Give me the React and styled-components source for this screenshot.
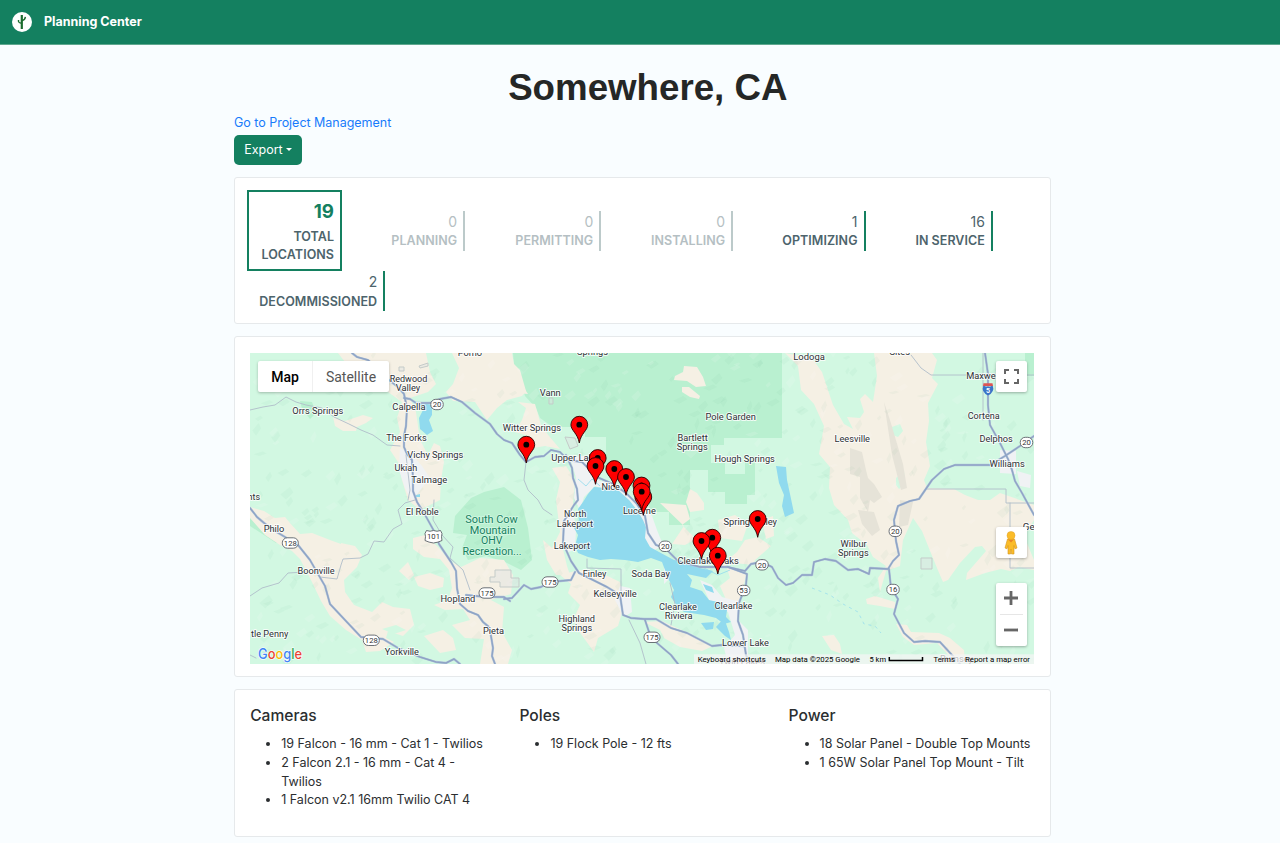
import React from "react";
import styled, { createGlobalStyle } from "styled-components";

const Global = createGlobalStyle`
  *, *::before, *::after { box-sizing: border-box; }
  html { background: #f9fdff; }
  body {
    margin: 0;
    font-family: Inter, "Liberation Sans", sans-serif;
    font-size: 12.5px;
    line-height: 18.75px;
    color: #2b2e30;
    background: #f9fdff;
    height: 843px;
    overflow: hidden;
  }
`;

const Navbar = styled.header`
  display: flex;
  align-items: center;
  gap: 12px;
  height: 44.5px;
  padding: 0 12px;
  background: #148060;
  border-bottom: 1px solid #5fa88f;
  color: #fff;
`;

const Brand = styled.span`
  font-weight: 700;
  font-size: 12.5px;
  margin-top: 0.6px;
`;

const Container = styled.main`
  width: 816.6px;
  margin-left: 234px;
`;

const Title = styled.h1`
  margin: 20.5px 0 0;
  padding-left: 11px;
  text-align: center;
  font-family: "Liberation Sans", Arial, sans-serif;
  font-weight: 700;
  font-size: 36.7px;
  line-height: 45px;
  color: #252726;
`;

const ProjectLink = styled.a`
  display: block;
  width: max-content;
  margin-top: 4.4px;
  color: #187bfb;
  font-size: 12.5px;
  letter-spacing: -0.02px;
  text-decoration: none;
`;

const ExportButton = styled.button`
  display: flex;
  align-items: center;
  justify-content: center;
  gap: 3px;
  width: 67.8px;
  height: 29.6px;
  margin: 1.8px 0 0;
  padding: 0;
  border: 0;
  border-radius: 5px;
  background: #148060;
  color: #fff;
  font: 400 12.5px Inter, sans-serif;
`;

const Caret = styled.span`
  border: 3.7px solid transparent;
  border-top-color: #fff;
  border-bottom: 0;
`;

const Card = styled.section`
  border: 1px solid #e6e9eb;
  border-radius: 3px;
  background: #fff;
  margin-top: 12.6px;
  padding: ${(p) => p.$pad};
  height: ${(p) => p.$height}px;
`;

const StatList = styled.div`
  display: flex;
  flex-wrap: wrap;
  align-items: center;
  column-gap: 37.5px;
`;

const Stat = styled.div`
  width: ${(p) => p.$width}px;
  height: 40px;
  padding-right: 6px;
  text-align: right;
  white-space: nowrap;
  border-right: 2px solid ${(p) => (p.$muted ? "#bccaca" : "#148060")};
  color: ${(p) => (p.$muted ? "#b5bfc3" : "#4d646c")};
`;

const TotalStat = styled(Stat)`
  border: 2px solid #148060;
  height: 81px;
  padding: 7px 5.5px 0 0;
`;

const StatValue = styled.div`
  font-size: ${(p) => (p.$large ? 18.75 : 14)}px;
  font-weight: ${(p) => (p.$large ? 700 : 400)};
  line-height: ${(p) => (p.$large ? 26 : 21)}px;
  ${(p) => p.$large && "color: #148060; margin-bottom: 1.6px;"}
`;

const StatLabel = styled.div`
  font-size: 12.5px;
  font-weight: 600;
  line-height: 18.75px;
  letter-spacing: 0.04px;
  padding-top: 0.6px;
`;

const MapFrame = styled.div`
  position: relative;
  width: 784px;
  height: 311px;
  overflow: hidden;
  font-family: Roboto, sans-serif;

  > svg { display: block; }
`;

const MapTypes = styled.div`
  position: absolute;
  left: 8px;
  top: 8px;
  display: flex;
  height: 31px;
  box-shadow: 0 1px 3px rgba(0, 0, 0, 0.25);
  border-radius: 2px;
  background: #fff;
`;

const MapType = styled.div`
  width: ${(p) => p.$width}px;
  text-align: center;
  font-size: 14px;
  line-height: 32px;
  font-weight: ${(p) => (p.$active ? 500 : 400)};
  color: ${(p) => (p.$active ? "#000" : "#565656")};
  border-left: ${(p) => (p.$active ? 0 : 1)}px solid #f0f0f0;
`;

const MapControl = styled.div`
  position: absolute;
  right: 7.3px;
  top: ${(p) => p.$top}px;
  width: 31px;
  height: ${(p) => p.$height}px;
  display: flex;
  flex-direction: column;
  align-items: center;
  justify-content: center;
  background: #fff;
  border-radius: 2px;
  box-shadow: 0 1px 3px rgba(0, 0, 0, 0.3);
`;

const ZoomHalf = styled.div`
  width: 23px;
  height: 31.5px;
  display: flex;
  align-items: center;
  justify-content: center;
  & + & { border-top: 1px solid #e6e6e6; }
`;

const Columns = styled.div`
  display: grid;
  grid-template-columns: repeat(3, 1fr);
  column-gap: 23.4px;
`;

const Heading = styled.h5`
  margin: 0 0 9.2px;
  font-size: 15.6px;
  font-weight: 500;
  line-height: 18.75px;
`;

const List = styled.ul`
  margin: 0;
  padding-left: 31px;
`;

const stats = [
  { value: 0, label: "PLANNING", width: 86.2, muted: true },
  { value: 0, label: "PERMITTING", width: 98.6, muted: true },
  { value: 0, label: "INSTALLING", width: 94.4, muted: true },
  { value: 1, label: "OPTIMIZING", width: 94.9 },
  { value: 16, label: "IN SERVICE", width: 89.8 },
  { value: 2, label: "DECOMMISSIONED", width: 138.2 },
];

const inventory = [
  {
    title: "Cameras",
    items: [
      "19 Falcon - 16 mm - Cat 1 - Twilios",
      "2 Falcon 2.1 - 16 mm - Cat 4 - Twilios",
      "1 Falcon v2.1 16mm Twilio CAT 4",
    ],
  },
  { title: "Poles", items: ["19 Flock Pole - 12 fts"] },
  { title: "Power", items: ["18 Solar Panel - Double Top Mounts", "1 65W Solar Panel Top Mount - Tilt"] },
];

// Place labels: text, left edge, baseline, width
const places = [
  ["Orrs Springs", 292.3, 414, 51], ["Redwood", 389.7, 382, 37.6], ["Valley", 395.7, 391, 24.5],
  ["Calpella", 392.3, 410, 33.4], ["The Forks", 386.3, 441, 40.4], ["Vichy Springs", 407.3, 458, 56],
  ["Ukiah", 394.5, 471, 22.7], ["Talmage", 411.3, 483, 36], ["nts", 247.5, 500, 12.5],
  ["Pomo", 457.7, 356, 24.3], ["Springs", 577, 355.3, 31], ["Vann", 539.7, 396, 21],
  ["Witter Springs", 502.8, 431, 58.2], ["Upper Lake", 551.3, 460.5, 47], ["Pole Garden", 705.5, 420, 50.3],
  ["Bartlett", 677.5, 441, 30.2], ["Springs", 676.7, 450.3, 31], ["Hough Springs", 714.5, 462, 60.3],
  ["Nice", 601.5, 490, 18.3], ["Lodoga", 793.3, 360, 31.5], ["Sites", 889.5, 354.5, 20.5],
  ["Maxwell", 966.2, 379, 34], ["Cortena", 967.7, 419, 32], ["Leesville", 834.5, 442, 35.5],
  ["Delphos", 979.5, 442, 33.2], ["Williams", 989.5, 467.3, 35.3], ["Philo", 263.7, 532.2, 20.7],
  ["El Roble", 405.7, 515, 33], ["Boonville", 297.5, 574.3, 37.2], ["Hopland", 440.5, 602.3, 34.8],
  ["Pieta", 483, 634, 21], ["tle Penny", 251, 636.7, 37.3], ["Yorkville", 384.7, 655, 34.3],
  ["North", 564, 517.3, 22.3], ["Lakeport", 556.7, 526.7, 36.3], ["Lakeport", 553.7, 549, 36.3],
  ["Finley", 582.7, 577.2, 23.6], ["Kelseyville", 593.5, 596.5, 43.3], ["Highland", 558.5, 621.5, 36.5],
  ["Springs", 561.5, 630.5, 30.6], ["Soda Bay", 631.5, 577.2, 38.3], ["Clearlake", 659, 609.8, 38],
  ["Riviera", 664.7, 619, 27.8], ["Clearlake", 714.5, 608.5, 38], ["Lower Lake", 722, 646, 47],
  ["Lucerne", 623, 514, 32.8], ["Clearlake Oaks", 677.5, 564, 61.3], ["Spring Valley", 723.5, 525.2, 53.5],
  ["Twin Lakes", 719, 664.5, 46], ["Wilbur", 840.5, 547, 26.2], ["Springs", 838, 556.2, 30.7],
  ["Geneva", 1022.8, 529.5, 32], ["Rumsey", 940, 661.5, 33],
];

const parkLabels = [
  ["South Cow", 465.3, 522.5, 52.5], ["Mountain", 469.7, 533.5, 46], ["OHV", 481, 544.3, 21.5], ["Recreation...", 462.5, 555.3, 59],
];

const shields = [
  ["20", 437, 404.5], ["128", 290.3, 543], ["101", 433.5, 536.5, true], ["175", 487, 593], ["128", 371.3, 640.3],
  ["175", 550, 582], ["20", 665.3, 546.3], ["175", 652, 637.3], ["20", 762, 564.8], ["53", 743.7, 590.5],
  ["20", 895.3, 531.3], ["16", 893, 589.5], ["20", 1026.5, 442.5],
];

const pins = [
  [526.3, 444.7], [579.3, 424.7], [597.7, 458], [595.5, 466], [614.3, 469], [626, 477],
  [641.5, 485.5], [643.3, 497], [641.7, 491.7], [712.3, 537.7], [701.5, 541], [717.8, 555.7], [757.7, 519],
];

const beige = [
  "M338 353L348 366L378 372L388 392L402 402L397 418L400 432L390 450L398 462L402 480L408 500L420 510L440 500L441 480L444 462L440 446L434 443L428 455L420 440L416 412L410 398L428 392L436 384L430 372L426 353Z",
  "M452 353L459 368L453 384L446 392L453 401L475 402L487 420L497 408L507 400L522 396L526 391L520 370L514 364L512 353Z",
  "M504 364L515 366L519 380L528 394L516 393L504 400Z",
  "M333 417L345 421L363 415L373 418L366 423L357 427L356 431L343 431L335 426Z",
  "M518 402L535 404L541 425L549 436L560 449L545 446L533 448L529 436L515 432L522 420L526 408Z",
  "M552 468L566 466L575 480L573 505L565 520L562 545L567 566L570 575L556 575L547 560L543 540L552 548L560 532L556 500L560 482Z",
  "M250 507L264 511L275 518L285 517L290 523L300 534L312 533L330 540L341 544L341 543L355 546L362 555L357 567L344 580L345 592L354 605L372 612L382 602L393 607L410 609L414 625L403 636L388 631L386 638L394 642L380 651L366 652L362 640L346 630L330 616L321 601L311 580L300 559L292 551L280 545L265 535L250 518Z",
  "M413 538L425 535L438 547L450 561L461 567L480 558L504 560L513 575L511 594L491 600L504 607L502 632L512 650L508 664L480 664L484 639L465 638L452 625L470 620L463 609L445 610L434 605L448 600L452 588L449 570L440 559L424 557L413 549Z",
  "M399 571L408 562L414 575L409 580Z", "M414 577L430 573L444 578L443 587L430 590L418 586Z",
  "M424 636L443 630L453 638L456 650L440 653Z",
  "M560 575L579 570L599 572L620 582L625 603L618 626L598 638L594 652L578 630L574 618L580 605L568 593L571 584Z",
  "M644 622L662 621L690 634L713 646L702 651L680 647L664 638L660 630Z",
  "M675 376L683 372L684 366L697 367L703 377L706 386L696 387L687 381L674 380Z",
  "M682 387L689 387L700 396L699 399L690 397L682 392Z",
  "M686 502L690 489L697 493L704 503L704 510L690 512Z",
  "M660 503L686 505L690 519L682 525L696 539L685 545L672 544L684 526Z",
  "M725 562L753 565L755 560L771 546L758 537L745 540L737 552L720 566L747 573L737 610L728 604L720 586L730 578Z",
  "M718 520L735 515L748 524L742 541L720 538Z", "M762 520L773 516L774 536L766 539Z",
  "M785 353L811 358L814 361L822 372L833 405L844 424L853 429L847 417L860 418L864 412L860 399L865 394L873 402L877 376L874 353L932 353L937 360L932 378L938 384L928 403L929 421L926 442L930 466L924 480L927 488L954 489L965 495L978 500L990 500L1000 493L1034 505L1034 520L1024 536L1034 560L1034 570L1019 567L1010 571L1001 569L985 573L966 580L967 573L986 551L982 546L975 547L960 563L948 580L943 582L937 568L922 531L913 518L903 540L900 566L886 571L880 592L878 578L886 566L873 557L867 545L852 533L848 520L834 505L829 488L830 467L819 454L824 426L814 404L801 390L798 366Z",
  "M866 599L875 596L895 602L895 609L880 606L867 604Z", "M822 636L834 635L840 644L842 654L831 650Z",
  "M896 624L907 625L911 632L939 633L950 638L964 650L965 662L953 660L937 643L914 645L903 637Z",
];

const roads = [
  "M352 353L357 357L368 360L375 366L389 380L398 387L404 394L407 408L406 426L404 436L404 447L407 454L412 460L413 480L413 491L417 502L424 513L434 531L439 544L451 562L456 571L457 588L460 604L468 611L478 615L483 622L489 627L491 636L493 648L492 656L495 664",
  "M404 398L410 399L416 403L430 403L440 399L451 397L462 402L475 413L490 424L497 434L504 440L512 443L520 455L526 462L535 457L544 456L551 450L560 452L568 460L582 462L590 470L597 477L613 484L626 493L637 504L645 516L648 533L656 545L665 548L678 561L700 567L728 567L745 571L751 564L762 562L772 567L778 578L786 585L793 583L802 575L812 575L814 562L825 559L836 561L848 570L858 569L869 574L870 568L888 569L893 561L899 555L896 541L894 520L898 506L910 501L919 499L932 480L944 469L955 465L990 465L1005 456L1020 446L1034 436",
  "M566 455L572 468L573 478L577 489L578 500L574 505L564 521L563 543L571 561L579 573L607 587L620 595L623 615L631 618L644 619L656 619L671 628L687 633L712 646L722 645L744 646",
  "M504 599L512 598L524 585L531 589L541 587L550 582L571 580L575 572",
  "M466 595L486 597L504 597L510 601", "M645 620L649 632L657 643L671 655L678 664",
  "M728 567L747 574L746 585L739 603L738 621L743 635L746 655L750 664",
  "M889 569L891 588L898 599L894 614L904 633L914 642L925 641L940 642L952 655L960 664",
  "M250 508L257 517L270 528L285 537L298 545L310 560L318 574L325 586L330 604L345 620L361 637L383 639L398 648L420 657L436 662L446 663L454 659L460 664",
  "M985 353L988 374L988 405L990 425L1000 443L1008 459L1012 470L1015 481L1022 493L1034 515",
];

const thinRoads = [
  "M320 577L337 579L341 565L343 559L360 558L368 554L374 541L384 542L393 529L402 524L398 510L405 503L415 500",
  "M250 410L263 407L275 405L286 397L296 402L306 405L322 408L334 417L349 424L361 430L373 435L387 445L400 446",
  "M250 596L262 588L279 583L288 573L306 572", "M406 455L410 490L408 500", "M434 500L433 520L442 535L453 547L450 558L463 570L470 590",
  "M526 462L524 480L528 490L538 500L543 509L552 515", "M911 355L921 368L931 375L1034 375",
  "M983 353L983 420", "M927 489L1006 489L1006 503L1034 503", "M1010 503L1010 568L1034 568",
  "M587 559L587 568L621 569L621 595", "M629 620L640 643L646 664", "M670 583L675 604L671 625", "M250 655L256 658",
];

const hash = (n) => {
  const v = Math.sin(n * 127.1) * 43758.5453;
  return v - Math.floor(v);
};

const relief = Array.from({ length: 620 }, (_, i) => {
  const x = 250 + hash(i + 1) * 784;
  const y = 353 + hash(i + 901) * 311;
  const w = 3 + hash(i + 77) * 7;
  const h = 2 + hash(i + 311) * 6;
  return {
    d: `M${x} ${y}l${w} ${-h}l${w * 0.4} ${h * 0.7}l${-w * 0.8} ${h}z`,
    dark: i % 3 !== 0,
  };
});

function Terrain() {
  return (
    <g>
      <rect x="250" y="353" width="784" height="311" fill="#d2f8e2" />
      <path
        fill="#b9f0d0"
        d="M513 353H782V438H755V495H747V504H725V492H708V470H690V525H669V512H652L640 492L618 478L604 470L606 437H580L557 430L540 418L536 408L525 396L519 375L514 366Z"
      />
      <path
        fill="#b9f0d0"
        d="M484 492L504 487L521 500L528 528L532 560L521 570L505 562L486 556L468 560L462 548L467 535L453 533L455 516L471 498Z M250 516L264 522L284 541L276 543L250 526Z M1025 353H1034V376H1025Z M300 401L312 402L316 413L310 419L302 409Z"
      />
      <path fill="#d2f8e2" d="M724 438H765V456H745V474H725V463H711V445H724Z M555 427H573V421H585V437H606V460H580L566 446Z M692 495H712V505H747V515H692Z" />
      {beige.map((d) => (
        <path key={d} d={d} fill="#f5f0e4" />
      ))}
      <path fill="#d2f8e2" d="M892 427L900 424L903 431L898 437L890 434Z M896 478L904 471L905 483L899 489L896 485Z M382 629L396 625L406 630L394 634Z" />
      <path fill="#e6e3d8" d="M850 448L862 452L866 470L868 478L874 484L882 497L874 503L870 500L868 512L860 498L860 477L850 474Z M858 510L874 512L880 530L872 536L862 524Z M884 402L890 420L903 464L907 488L901 490L892 455Z M900 500L913 502L908 525L899 527Z" />
      {relief.map((r) => (
        <path key={r.d} d={r.d} fill={r.dark ? "#4a9a78" : "#ffffff"} opacity={r.dark ? 0.042 : 0.12} />
      ))}
      <path
        fill="#f0f2f4"
        d="M400 448L412 455L422 466L430 478L421 489L412 501L405 488L399 470Z M570 457L584 456L594 466L599 481L613 482L640 505L652 516L657 530L663 545L653 551L645 540L643 522L629 500L595 486L584 497L580 510L574 498L576 478Z M562 520L573 508L576 530L575 550L568 552L562 535Z M664 560H666L670 578L664 584Z M700 580L712 585L722 597L740 602L738 620L748 630L748 664L728 664L724 648L735 635L728 612L710 602Z M620 586L630 588L632 612L624 617L615 600Z M1000 450L1016 451L1016 474L1000 473Z M1017 471L1031 475L1030 488L1020 486Z"
      />
      <path
        fill="#90daee"
        d="M588 494L594 487L606 488L618 490L629 500L637 510L643 520L646 527L645 538L650 547L659 552L674 560L691 562L700 568L713 571L706 578L687 574L692 580L690 587L702 591L709 600L722 603L727 610L726 617L731 622L724 624L716 618L704 615L684 612L675 603L671 597L674 590L668 578L662 562L651 558L638 562L625 560L611 559L600 560L588 557L578 553L575 546L578 535L574 528L579 520L578 509L583 502Z"
      />
      <path fill="#90daee" d="M701 623L714 622L713 629L706 630Z M716 627L724 618L729 632L731 640L725 636Z M703 584L712 587L714 593L706 590Z M419 402L432 405L432 415L429 420L433 431L427 435L420 429L419 418L423 410Z M776 466L786 467L787 480L790 494L794 513L785 517L782 506L784 495L779 483Z M416 495L420 494L420 497L416 497Z" />
      <path fill="none" stroke="#90daee" strokeWidth=".8" d="M578 479L586 486L592 479L600 486M700 566L718 575L730 570" />
      <path fill="none" stroke="#90daee" strokeWidth=".7" strokeDasharray="3 4" d="M812 588L830 595L843 604L858 612L864 624L875 626L881 633" />
      <g fill="#dfe3e2" stroke="#c4cbc9" strokeWidth="1">
        <path fillOpacity=".45" d="M495 570H511V578H519V587H500V582H490V577H495Z M565 437L575 438L578 446L570 449ZM921 558H932V569H921ZM399 367H404V371H399ZM419 366L428 363V366L420 368ZM549 398H553V404H549Z" />
      </g>
    </g>
  );
}

function Shield({ text, x, y, us }) {
  const w = text.length > 2 ? 16 : 12.5;
  return (
    <g>
      {us ? (
        <path d={`M${x - 7} ${y - 6}q3.500 1.500 7 0q3.500 1.500 7 0l1.500 3q-1 3 0 7q-4 2-8.500 2.500q-4.500-.5-8.500-2.500q1-4 0-7z`} fill="#fff" stroke="#5b6168" strokeWidth=".9" />
      ) : (
        <rect x={x - w / 2} y={y - 5.2} width={w} height="10.400" rx="5" fill="#fff" stroke="#5b6168" strokeWidth=".9" />
      )}
      <text x={x} y={y + 2.8} fontSize="7.700" fill="#333" textAnchor="middle">{text}</text>
    </g>
  );
}

function Pin({ x, y }) {
  return (
    <g transform={`translate(${x} ${y})`}>
      <path d="M0 18.300C-1.600 8.500-8.400 5.800-8.400 0A8.400 8.400 0 0 1 8.400 0C8.400 5.800 1.600 8.500 0 18.300Z" fill="#f00" stroke="#200" strokeWidth=".9" />
      <circle r="2.900" fill="#000" />
    </g>
  );
}

function Attribution() {
  return (
    <g fontSize="7.800" fill="#000">
      <rect x="694" y="654.300" width="340" height="10" fill="#f5f5f5" opacity=".72" />
      <text x="697.700" y="661.500" textLength="68" lengthAdjust="spacingAndGlyphs">Keyboard shortcuts</text>
      <text x="775" y="661.500" textLength="85" lengthAdjust="spacingAndGlyphs">Map data ©2025 Google</text>
      <text x="869.500" y="661.500" textLength="16.500" lengthAdjust="spacingAndGlyphs">5 km</text>
      <path d="M889.300 657V660.500H922.500V657" fill="none" stroke="#000" strokeWidth="1.500" />
      <text x="933.500" y="661.500" textLength="21.500" lengthAdjust="spacingAndGlyphs">Terms</text>
      <text x="965" y="661.500" textLength="65" lengthAdjust="spacingAndGlyphs">Report a map error</text>
    </g>
  );
}

function MapCanvas() {
  return (
    <svg width="784" height="311" viewBox="250 353 784 311" fontFamily="Roboto, sans-serif">
      <Terrain />
      <g fill="none" strokeLinejoin="round" strokeLinecap="round">
        {thinRoads.map((d) => <path key={d} d={d} stroke="#b0bdc9" strokeWidth=".9" />)}
        {roads.map((d) => <path key={d} d={d} stroke="#b4c6dc" strokeWidth="2.300" />)}
        {roads.map((d) => <path key={d} d={d} stroke="#8fa4c5" strokeWidth="1.400" />)}
      </g>
      {shields.map(([t, x, y, us]) => <Shield key={`${x}${y}`} text={t} x={x} y={y} us={us} />)}
      <path d="M983.300 385.500Q988 388 992.700 385.500Q995 392 988 395.500Q981 392 983.300 385.500Z" fill="#3b74c8" />
      <path d="M983.500 383.300H992.500L993 386H983Z" fill="#dc5555" />
      <text x="988" y="392.800" fontSize="7" fontWeight="700" fill="#fff" textAnchor="middle">5</text>
      <g fontSize="9.800" fill="#2d3135" stroke="#fff" strokeWidth="2" strokeOpacity=".8" paintOrder="stroke" strokeLinejoin="round">
        {places.map(([t, x, y, w]) => (
          <text key={`${x}${y}`} x={x} y={y} textLength={w} lengthAdjust="spacingAndGlyphs">{t}</text>
        ))}
      </g>
      <g fontSize="11" fill="#168060" stroke="#d5f8e4" strokeWidth="1.500" paintOrder="stroke">
        {parkLabels.map(([t, x, y, w]) => (
          <text key={t} x={x} y={y} textLength={w} lengthAdjust="spacingAndGlyphs">{t}</text>
        ))}
      </g>
      {pins.map(([x, y]) => <Pin key={`${x}${y}`} x={x} y={y} />)}
      <text x="258" y="658.700" fontFamily="Inter, sans-serif" fontSize="14.500" fontWeight="500" textLength="44" lengthAdjust="spacingAndGlyphs" stroke="#fff" strokeWidth="1.200" paintOrder="stroke">
        <tspan fill="#4285f4">G</tspan><tspan fill="#ea4335">o</tspan><tspan fill="#fbbc04">o</tspan><tspan fill="#4285f4">g</tspan><tspan fill="#34a853">l</tspan><tspan fill="#ea4335">e</tspan>
      </text>
      <Attribution />
    </svg>
  );
}

function MapPanel() {
  return (
    <MapFrame>
      <MapCanvas />
      <MapTypes>
        <MapType $active $width={54}>Map</MapType>
        <MapType $width={77}>Satellite</MapType>
      </MapTypes>
      <MapControl $top={8} $height={31}>
        <svg width="15" height="15" viewBox="0 0 15 15" fill="none" stroke="#666" strokeWidth="2">
          <path d="M1 5V1H5M10 1H14V5M14 10V14H10M5 14H1V10" />
        </svg>
      </MapControl>
      <MapControl $top={174} $height={31}>
        <svg width="14" height="24" viewBox="0 0 14 24">
          <path d="M3.500 8H10.500L13 17L11 17.800L10 14.500L10 23H7.500L7 18L6.500 23H4L4 14.500L3 17.800L1 17Z" fill="#fbbc28" stroke="#d5951b" strokeWidth=".6" />
          <path d="M4 8.500L7 11.500L10 8.500Z" fill="#ea8526" />
          <circle cx="7" cy="4.500" r="4" fill="#fbbc28" stroke="#dfa32a" strokeWidth=".5" />
        </svg>
      </MapControl>
      <MapControl $top={229.7} $height={63}>
        <ZoomHalf>
          <svg width="14" height="14" viewBox="0 0 14 14" stroke="#666" strokeWidth="2.800"><path d="M0 7H14M7 0V14" /></svg>
        </ZoomHalf>
        <ZoomHalf>
          <svg width="14" height="14" viewBox="0 0 14 14" stroke="#666" strokeWidth="2.800"><path d="M0 7H14" /></svg>
        </ZoomHalf>
      </MapControl>
    </MapFrame>
  );
}

const LogoMark = styled.svg`
  margin-top: 1px;
`;

function Logo() {
  return (
    <LogoMark width="20" height="20" viewBox="0 0 20 20">
      <circle cx="10" cy="10" r="10" fill="#fff" />
      <g fill="none" stroke="#1b6b2e">
        <path d="M9.800 3V17" strokeWidth="2.200" />
        <path d="M6.500 8V9.500Q6.700 10.800 9.500 11.300M13.400 4.800Q13 8 10 8.500" strokeWidth="1.400" />
      </g>
    </LogoMark>
  );
}

export default function App() {
  return (
    <>
      <Global />
      <Navbar>
        <Logo />
        <Brand>Planning Center</Brand>
      </Navbar>
      <Container>
        <Title>Somewhere, CA</Title>
        <ProjectLink>Go to Project Management</ProjectLink>
        <ExportButton>Export<Caret /></ExportButton>
        <Card $pad="12.200px 12px" $height={146.5}>
          <StatList>
            <TotalStat $width={94.5}>
              <StatValue $large>19</StatValue>
              <StatLabel>TOTAL<br />LOCATIONS</StatLabel>
            </TotalStat>
            {stats.map((s) => (
              <Stat key={s.label} $width={s.width} $muted={s.muted}>
                <StatValue>{s.value}</StatValue>
                <StatLabel>{s.label}</StatLabel>
              </Stat>
            ))}
          </StatList>
        </Card>
        <Card $pad="15.800px 15px" $height={340.4}>
          <MapPanel />
        </Card>
        <Card $pad="17px 15.200px" $height={148}>
          <Columns>
            {inventory.map((group) => (
              <div key={group.title}>
                <Heading>{group.title}</Heading>
                <List>
                  {group.items.map((item) => <li key={item}>{item}</li>)}
                </List>
              </div>
            ))}
          </Columns>
        </Card>
      </Container>
    </>
  );
}
